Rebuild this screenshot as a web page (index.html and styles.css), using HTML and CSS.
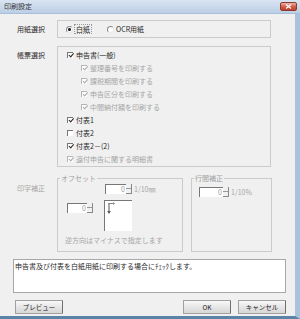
FILE: index.html
```html
<!DOCTYPE html>
<html lang="ja">
<head>
    <meta charset="UTF-8">
    <title>印刷設定</title>
    <link rel="stylesheet" href="styles.css">
</head>
<body>
<div class="window">
    <div class="titlebar">
        <span class="caption">印刷設定</span>
        <span class="close">
            <svg width="7" height="5" viewBox="0 0 7 5"><path d="M1 0.5 L6 4.5 M6 0.5 L1 4.5" stroke="#fff" stroke-width="1.2"/></svg>
        </span>
    </div>

    <div class="client">
        <div class="row row-paper">
            <div class="label">用紙選択</div>
            <div class="group paper">
                <span class="radio checked"></span><span class="focus">白紙</span>
                <span class="radio second"></span><span>OCR用紙</span>
            </div>
        </div>

        <div class="row row-forms">
            <div class="label">帳票選択</div>
            <div class="group forms">
                <div class="item"><span class="chk on"></span>申告書(一般)</div>
                <div class="item sub off"><span class="chk on"></span>整理番号を印刷する</div>
                <div class="item sub off"><span class="chk on"></span>課税期間を印刷する</div>
                <div class="item sub off"><span class="chk on"></span>申告区分を印刷する</div>
                <div class="item sub off"><span class="chk on"></span>中間納付額を印刷する</div>
                <div class="item"><span class="chk on"></span>付表1</div>
                <div class="item"><span class="chk"></span>付表2</div>
                <div class="item"><span class="chk on"></span>付表2－(2)</div>
                <div class="item off"><span class="chk on"></span>還付申告に関する明細書</div>
            </div>
        </div>

        <div class="row row-adjust">
            <div class="label off">印字補正</div>
            <fieldset class="offset">
                <legend>オフセット</legend>
                <div class="offset-top">
                    <span class="spin"><span class="spin-input">0</span><span class="spin-btns"><i></i><i></i></span></span>
                    <span class="unit">1/10㎜</span>
                </div>
                <div class="offset-mid">
                    <span class="spin spin-left"><span class="spin-input">0</span><span class="spin-btns"><i></i><i></i></span></span>
                    <span class="arrows">
                        <svg width="27" height="30" viewBox="0 0 27 30">
                            <path d="M3 2.5 H8" stroke="#888" fill="none"/>
                            <path d="M8 1 L10 2.5 L8 4 Z" fill="#888"/>
                            <path d="M4 3 V11" stroke="#555" fill="none"/>
                            <path d="M2.2 10 L4 13 L5.8 10 Z" fill="#555"/>
                        </svg>
                    </span>
                </div>
                <div class="hint">逆方向はマイナスで指定します</div>
            </fieldset>
            <fieldset class="linefeed">
                <legend>行間補正</legend>
                <div class="linefeed-row">
                    <span class="spin spin-wide"><span class="spin-input">0</span><span class="spin-btns"><i></i><i></i></span></span>
                    <span class="unit">1/10%</span>
                </div>
            </fieldset>
        </div>

        <div class="message">申告書及び付表を白紙用紙に印刷する場合にﾁｪｯｸします。</div>

        <div class="buttons">
            <button class="preview">プレビュー</button>
            <button class="ok">OK</button>
            <button class="cancel">キャンセル</button>
        </div>
    </div>
</div>
</body>
</html>
```

FILE: styles.css
```css
body {
    margin: 0;
    font-family: "Noto Sans CJK JP", "Noto Sans", sans-serif;
    font-size: 7px;
    color: #2a2a2a;
}

.window {
    width: 300px;
    height: 319px;
    box-sizing: border-box;
    background: #f0f0f0;
    border-right: 5px solid #a9c2dd;
    border-bottom: 3px solid #5a84a6;
    display: flex;
    flex-direction: column;
}

.titlebar {
    height: 14px;
    margin-right: -5px;
    display: flex;
    align-items: center;
    background: linear-gradient(#d9e4f1, #bccfe5);
    border-bottom: 1px solid #a9bfd8;
    box-sizing: border-box;
}

.caption {
    margin-left: 4px;
    line-height: 13px;
    color: #333;
}

.close {
    margin-left: auto;
    margin-right: 3px;
    width: 17px;
    height: 9px;
    border-radius: 2px;
    background: linear-gradient(#eeb1a4, #cf5a45 55%, #c0402c);
    border: 1px solid #8c3a2e;
    box-sizing: border-box;
    display: flex;
    align-items: center;
    justify-content: center;
}

.client {
    flex: 1;
    display: flex;
    flex-direction: column;
}

.row {
    display: flex;
}

.label {
    width: 57px;
    padding-left: 17px;
    box-sizing: border-box;
    line-height: 8px;
}

.off {
    color: #a6a6a6;
}

.group {
    border: 1px solid #cbcbcb;
    width: 214px;
    box-sizing: border-box;
}

/* 用紙選択 */
.row-paper {
    margin-top: 6px;
    align-items: center;
}

.paper {
    height: 18px;
    display: flex;
    align-items: center;
    padding-left: 8px;
}

.radio {
    width: 5px;
    height: 5px;
    border-radius: 50%;
    border: 1px solid;
    border-color: #8a8a8a #e8e8e8 #e8e8e8 #8a8a8a;
    background: #fff;
    margin-right: 2px;
}

.radio.checked {
    background: radial-gradient(circle, #222 1.2px, #fff 1.8px);
}

.radio.second {
    margin-left: 16px;
}

.focus {
    outline: 1px dotted #999;
    outline-offset: 0;
    padding: 0 1px;
    line-height: 8px;
}

/* 帳票選択 */
.row-forms {
    margin-top: 8px;
}

.row-forms .label {
    padding-top: 5px;
}

.forms {
    padding: 1px 0 1px 9px;
}

.item {
    height: 13px;
    display: flex;
    align-items: center;
}

.item.sub {
    padding-left: 14px;
}

.chk {
    position: relative;
    width: 5px;
    height: 5px;
    border-top: 1px solid #777;
    border-left: 1px solid #777;
    background: #fff;
    margin-right: 3px;
}

.chk.on::after {
    content: '';
    position: absolute;
    left: 1.5px;
    top: -0.5px;
    width: 1.5px;
    height: 3.5px;
    border: solid #222;
    border-width: 0 1px 1px 0;
    transform: rotate(40deg);
}

.off .chk {
    border-color: #b5b5b5;
}

.off .chk.on::after {
    border-color: #a6a6a6;
}

/* 印字補正 */
.row-adjust {
    margin-top: 7px;
}

.row-adjust .label {
    padding-top: 10px;
}

fieldset {
    margin: 0;
    padding: 0;
    min-width: 0;
    border: 1px solid #cbcbcb;
    box-sizing: border-box;
    height: 78px;
}

legend {
    padding: 0 1px;
    margin-left: 2px;
    line-height: 8px;
    color: #a0a0a0;
}

.offset {
    width: 126px;
}

.linefeed {
    width: 81px;
    margin-left: 8px;
}

.unit {
    color: #a6a6a6;
    margin-left: 2px;
}

.offset-top {
    margin-top: 2px;
    margin-left: 47px;
    display: flex;
    align-items: center;
}

.spin {
    display: flex;
    width: 27px;
    height: 10px;
}

.spin-input {
    flex: 1;
    background: #fff;
    border-top: 1px solid #777;
    border-left: 1px solid #777;
    text-align: right;
    padding-right: 1px;
    line-height: 9px;
    color: #999;
}

.spin-btns {
    width: 5px;
    display: flex;
    flex-direction: column;
    border-right: 1px solid #888;
    border-bottom: 1px solid #888;
    background: #f0f0f0;
}

.spin-btns i {
    flex: 1;
    border-bottom: 1px solid #999;
}

.spin-btns i:last-child {
    border-bottom: none;
}

.offset-mid {
    margin-top: 6px;
    display: flex;
    align-items: flex-start;
}

.spin-left {
    width: 26px;
    margin-left: 9px;
    margin-top: 3px;
}

.arrows {
    margin-left: 11px;
    width: 28px;
    height: 31px;
    box-sizing: border-box;
    background: #fff;
    border-top: 1px solid #777;
    border-left: 1px solid #777;
    display: flex;
}

.hint {
    margin-top: 5px;
    margin-left: 7px;
    line-height: 8px;
    color: #a6a6a6;
}

.linefeed-row {
    margin-top: 5px;
    margin-left: 7px;
    display: flex;
    align-items: center;
}

.spin-wide {
    width: 30px;
}

/* メッセージ */
.message {
    margin: 7px 0 0 13px;
    width: 273px;
    height: 34px;
    box-sizing: border-box;
    background: #fff;
    border: 1px solid #a8a8a8;
    padding: 2px 1px;
    line-height: 8px;
}

.buttons {
    margin-top: 7px;
    display: flex;
    padding: 0 9px 0 15px;
}

.buttons button {
    width: 48px;
    height: 14px;
    padding: 0;
    font-family: "Noto Sans CJK JP", "Noto Sans", sans-serif;
    font-size: 6.5px;
    color: #222;
    background: linear-gradient(#f8f8f8, #e6e6e6 50%, #d6d6d6);
    border: 1px solid #a0a0a0;
    border-right-color: #707070;
    border-radius: 1px;
}

.buttons .ok {
    margin-left: auto;
}

.buttons .cancel {
    margin-left: 7px;
}
```
